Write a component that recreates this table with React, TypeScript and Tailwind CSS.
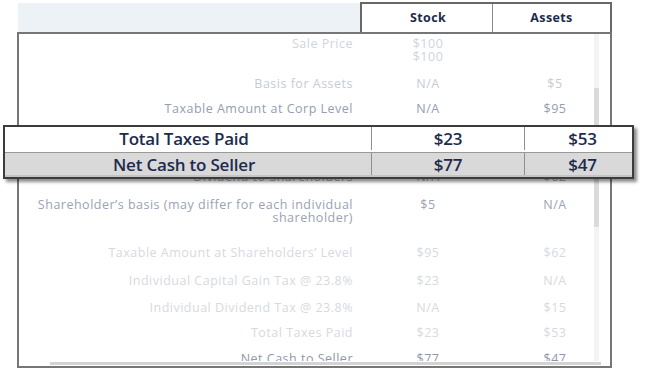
const rows = [
  { h: 'h-[40px]', label: 'Sale Price', stock: ['$100', '$100'], assets: '', tone: 'text-[#d0d4db]' },
  { h: 'h-[25px]', label: 'Basis for Assets', stock: ['N/A'], assets: '$5', tone: 'text-[#c6cbd3]' },
  { h: 'h-[31px]', label: 'Taxable Amount at Corp Level', stock: ['N/A'], assets: '$95', tone: 'text-[#959db0]' },
  { h: 'h-[37px]', label: 'Corporate Tax @ 21%', stock: ['N/A'], assets: '$20', tone: 'text-[#959db0]' },
  { h: 'h-[28px]', label: 'Dividend to Shareholders', stock: ['N/A'], assets: '$62', tone: 'text-[#a3aaba]' },
  { h: 'h-[48px]', label: 'Shareholder’s basis (may differ for each individual', label2: 'shareholder)', stock: ['$5'], assets: 'N/A', tone: 'text-[#9aa2b3]' },
  { h: 'h-[28px]', label: 'Taxable Amount at Shareholders’ Level', stock: ['$95'], assets: '$62', tone: 'text-[#d6dae0]' },
  { h: 'h-[27px]', label: 'Individual Capital Gain Tax @ 23.8%', stock: ['$23'], assets: 'N/A', tone: 'text-[#d6dae0]' },
  { h: 'h-[25px]', label: 'Individual Dividend Tax @ 23.8%', stock: ['N/A'], assets: '$15', tone: 'text-[#d6dae0]' },
  { h: 'h-[26px]', label: 'Total Taxes Paid', stock: ['$23'], assets: '$53', tone: 'text-[#d6dae0]' },
  { h: 'h-[26px]', label: 'Net Cash to Seller', stock: ['$77'], assets: '$47', tone: 'text-[#8e97aa]' },
]

const App = () => {
  return (
    <div className="relative h-[374px] w-[646px] overflow-hidden bg-white font-['Open_Sans',sans-serif]">
      <div className="ml-[17px] w-[595px]">
        {/* column header */}
        <div className="flex h-[32px]">
          <div className="ml-[1px] mt-[3px] h-[29px] w-[342px] bg-[#edf2f6]" />
          <div className="mt-[2px] flex h-[30px] w-[252px] border-x-2 border-t-2 border-[#686868] text-[12.5px] font-bold tracking-[0.4px] text-[#1d2b4d]">
            <div className="flex w-[131px] items-center justify-center border-r border-[#8a8a8a] pl-[2px]">Stock</div>
            <div className="flex flex-1 items-center justify-center">Assets</div>
          </div>
        </div>

        {/* faded scroll table */}
        <div className="flex h-[336px] flex-col border-2 border-[#767676]">
          <div className="flex h-[327px] overflow-hidden">
            <div className="w-[575px] pt-[3px] text-[12.5px] leading-[13px] tracking-[0.5px]">
              {rows.map((r) => (
                <div key={r.label} className={`grid grid-cols-[334px_150px_91px] ${r.h} ${r.tone}`}>
                  <div className="text-right">
                    {r.label}
                    {r.label2 && <div>{r.label2}</div>}
                  </div>
                  <div className="text-center">
                    {r.stock.map((s, i) => (
                      <div key={i}>{s}</div>
                    ))}
                  </div>
                  <div className="pl-[13px] text-center">{r.assets}</div>
                </div>
              ))}
            </div>
            <div className="w-[5px] bg-[#f3f3f3]">
              <div className="mt-[54px] h-[139px] bg-[#dadada]" />
            </div>
          </div>
          <div className="ml-[31px] mt-[1px] h-[3px] w-[551px] bg-[#d3d3d3]" />
        </div>
      </div>

      {/* highlighted summary rows */}
      <div className="absolute left-[3px] top-[125px] w-[631px] border-2 border-[#3c3c3c] text-[17px] font-semibold leading-none tracking-[-0.2px] text-[#1d2b4d] shadow-[3px_3px_3px_rgba(0,0,0,0.45)]">
        <div className="flex h-[25px] bg-white pb-[2px]">
          <div className="flex w-[366px] items-center justify-center pr-[8px]">Total Taxes Paid</div>
          <div className="flex w-[153px] items-center justify-center border-l border-[#8f8f8f]">$23</div>
          <div className="flex flex-1 items-center justify-center border-l border-[#8f8f8f] pl-[8px]">$53</div>
        </div>
        <div className="flex h-[25px] border-t border-[#9a9a9a] bg-[#d9d9d9] pb-[2px] shadow-[inset_0_-2px_0_#c4c4c4]">
          <div className="flex w-[366px] items-center justify-center pr-[8px]">Net Cash to Seller</div>
          <div className="flex w-[153px] items-center justify-center border-l border-[#8f8f8f]">$77</div>
          <div className="flex flex-1 items-center justify-center border-l border-[#8f8f8f] pl-[8px]">$47</div>
        </div>
      </div>
    </div>
  )
}

export default App
